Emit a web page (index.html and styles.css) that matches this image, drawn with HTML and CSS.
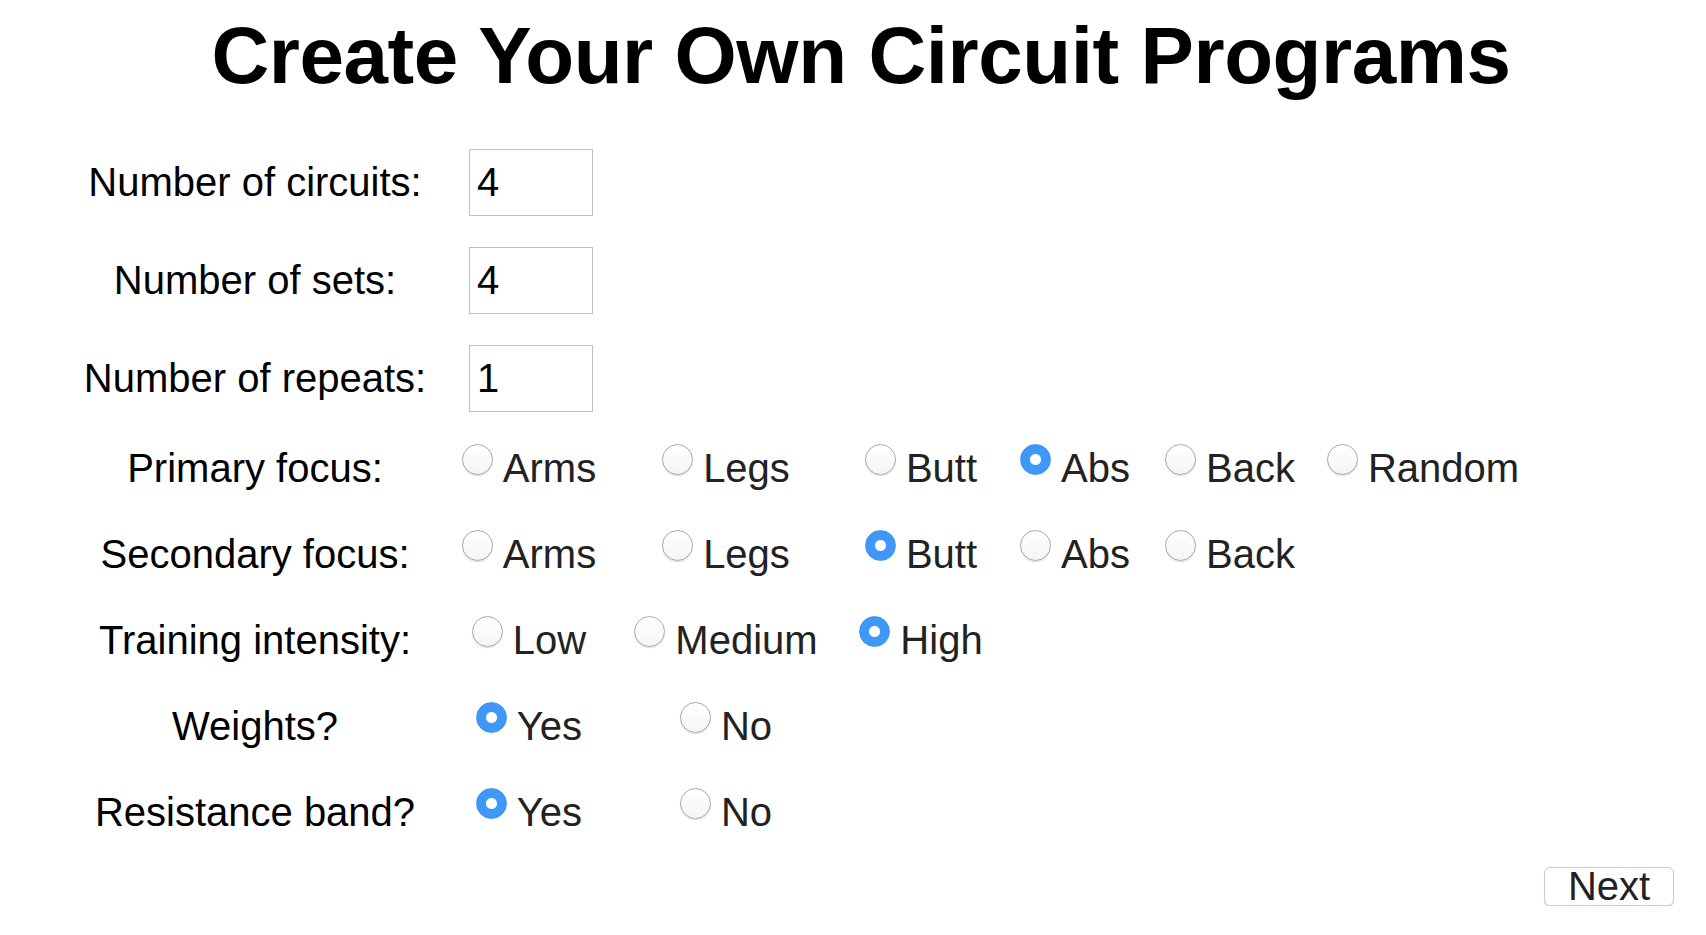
FILE: index.html
```html
<!DOCTYPE html>
<html lang="en">
<head>
<meta charset="utf-8">
<title>Create Your Own Circuit Programs</title>
<link rel="stylesheet" href="styles.css">
</head>
<body>
<h1 class="title">Create Your Own Circuit Programs</h1>
<form class="form">
  <div class="row row-field">
    <label class="label" for="circuits">Number of circuits:</label>
    <div class="cell"><input class="num" id="circuits" type="text" value="4"></div>
  </div>
  <div class="row row-field">
    <label class="label" for="sets">Number of sets:</label>
    <div class="cell"><input class="num" id="sets" type="text" value="4"></div>
  </div>
  <div class="row row-field">
    <label class="label" for="repeats">Number of repeats:</label>
    <div class="cell"><input class="num" id="repeats" type="text" value="1"></div>
  </div>
  <div class="row row-choice">
    <span class="label">Primary focus:</span>
    <label class="opt"><input class="radio" type="radio" name="primary"><span>Arms</span></label>
    <label class="opt"><input class="radio" type="radio" name="primary"><span>Legs</span></label>
    <label class="opt"><input class="radio" type="radio" name="primary"><span>Butt</span></label>
    <label class="opt"><input class="radio" type="radio" name="primary" checked><span>Abs</span></label>
    <label class="opt"><input class="radio" type="radio" name="primary"><span>Back</span></label>
    <label class="opt"><input class="radio" type="radio" name="primary"><span>Random</span></label>
  </div>
  <div class="row row-choice">
    <span class="label">Secondary focus:</span>
    <label class="opt"><input class="radio" type="radio" name="secondary"><span>Arms</span></label>
    <label class="opt"><input class="radio" type="radio" name="secondary"><span>Legs</span></label>
    <label class="opt"><input class="radio" type="radio" name="secondary" checked><span>Butt</span></label>
    <label class="opt"><input class="radio" type="radio" name="secondary"><span>Abs</span></label>
    <label class="opt"><input class="radio" type="radio" name="secondary"><span>Back</span></label>
  </div>
  <div class="row row-choice">
    <span class="label">Training intensity:</span>
    <label class="opt"><input class="radio" type="radio" name="intensity"><span>Low</span></label>
    <label class="opt"><input class="radio" type="radio" name="intensity"><span>Medium</span></label>
    <label class="opt"><input class="radio" type="radio" name="intensity" checked><span>High</span></label>
  </div>
  <div class="row row-choice">
    <span class="label">Weights?</span>
    <label class="opt"><input class="radio" type="radio" name="weights" checked><span>Yes</span></label>
    <label class="opt"><input class="radio" type="radio" name="weights"><span>No</span></label>
  </div>
  <div class="row row-choice">
    <span class="label">Resistance band?</span>
    <label class="opt"><input class="radio" type="radio" name="band" checked><span>Yes</span></label>
    <label class="opt"><input class="radio" type="radio" name="band"><span>No</span></label>
  </div>
</form>
<div class="actions">
  <button class="next" type="button">Next</button>
</div>
</body>
</html>
```

FILE: styles.css
```css
html, body {
  margin: 0;
  padding: 0;
  background: #fff;
}

body {
  font-family: "Liberation Sans", Arial, sans-serif;
  font-size: 40px;
  color: #000;
}

.title {
  margin: 10px 0 0;
  padding-left: 16px;
  font-size: 80px;
  line-height: 92px;
  font-weight: bold;
  text-align: center;
  letter-spacing: -0.43px;
}

.form {
  margin-top: 31px;
  padding-left: 64px;
}

.row {
  display: grid;
  grid-template-columns: 382px 166px 228px 162px 146px 164px 222px;
  align-items: center;
  justify-items: center;
  box-sizing: border-box;
}

.row-field {
  height: 98px;
}

.row-choice {
  height: 86px;
  padding-bottom: 5px;
}

.label {
  line-height: 46px;
  white-space: nowrap;
}

.cell {
  display: flex;
  justify-content: center;
}

.num {
  box-sizing: border-box;
  width: 124px;
  height: 67px;
  margin: 0 0 0 4px;
  padding: 0 0 0 7px;
  border: 1px solid #c0c0c0;
  border-radius: 0;
  font: inherit;
  color: #000;
  background: #fff;
  outline: none;
}

.opt {
  display: flex;
  align-items: flex-start;
  line-height: 46px;
  color: #222;
  white-space: nowrap;
  cursor: pointer;
}

.radio {
  appearance: none;
  -webkit-appearance: none;
  flex: none;
  box-sizing: border-box;
  width: 31px;
  height: 31px;
  margin: -1px 10px 0 0;
  border-radius: 50%;
  border: 1px solid #a9a9a9;
  background: linear-gradient(#ffffff, #f5f5f5);
  box-shadow: 0 1px 1px rgba(0, 0, 0, 0.14), inset 0 1px 1px rgba(255, 255, 255, 0.9);
}

.radio:checked {
  border-color: #3d95f7;
  background: radial-gradient(circle, #ffffff 0 5px, #3f97f7 6px);
  box-shadow: none;
}

.actions {
  display: flex;
  justify-content: flex-end;
  padding: 10px 32px 0 0;
}

.next {
  box-sizing: border-box;
  width: 130px;
  height: 39px;
  padding: 0;
  font: inherit;
  line-height: 37px;
  color: #222;
  background: #fff;
  border: 1px solid #cbcbcb;
  border-radius: 6px;
  box-shadow: 0 1px 1px rgba(0, 0, 0, 0.15);
}
```
